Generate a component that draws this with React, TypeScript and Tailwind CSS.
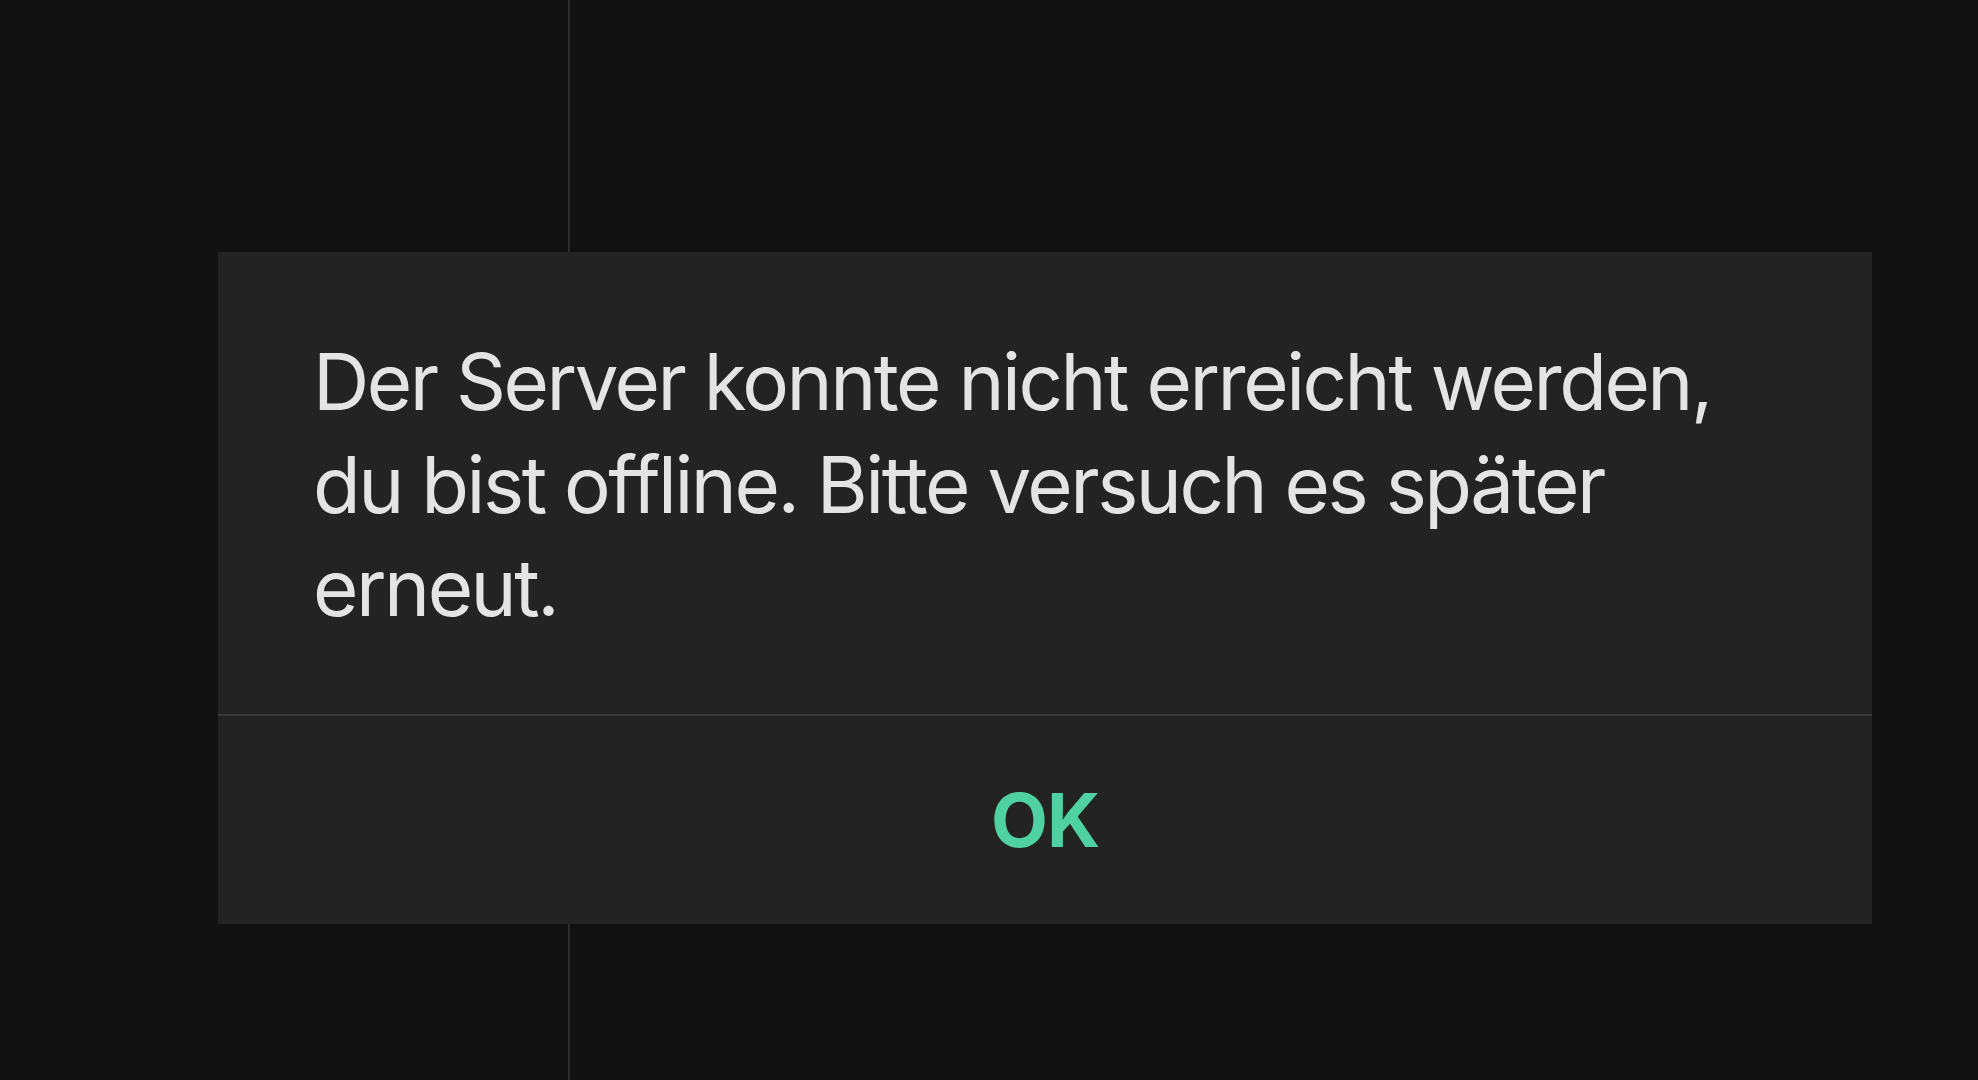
const font = { fontFamily: "Inter, 'Noto Sans', sans-serif" }

const App = () => {
    return (
        <div className="relative w-screen h-screen overflow-hidden bg-[#111111]" style={font}>
            <div className="flex h-full">
                <aside className="w-[570px] h-full border-r-2 border-[#2c2c2c]"></aside>
                <main className="flex-1 h-full"></main>
            </div>
            <div className="absolute inset-0 pl-[218px] pt-[252px]">
                <div className="w-[1654px] bg-[#232323] flex flex-col">
                    <p className="px-[95px] pt-[78px] pb-[75px] text-[78px] leading-[103px] text-[#e4e4e4] tracking-[-2.5px]">
                        Der Server konnte nicht erreicht werden, du bist offline. Bitte versuch es später erneut.
                    </p>
                    <div className="h-[2px] bg-[#383838]"></div>
                    <button className="h-[208px] flex items-center justify-center text-[74px] font-bold text-[#4fd1a3] tracking-[-1px]">
                        OK
                    </button>
                </div>
            </div>
        </div>
    )
}

export default App
